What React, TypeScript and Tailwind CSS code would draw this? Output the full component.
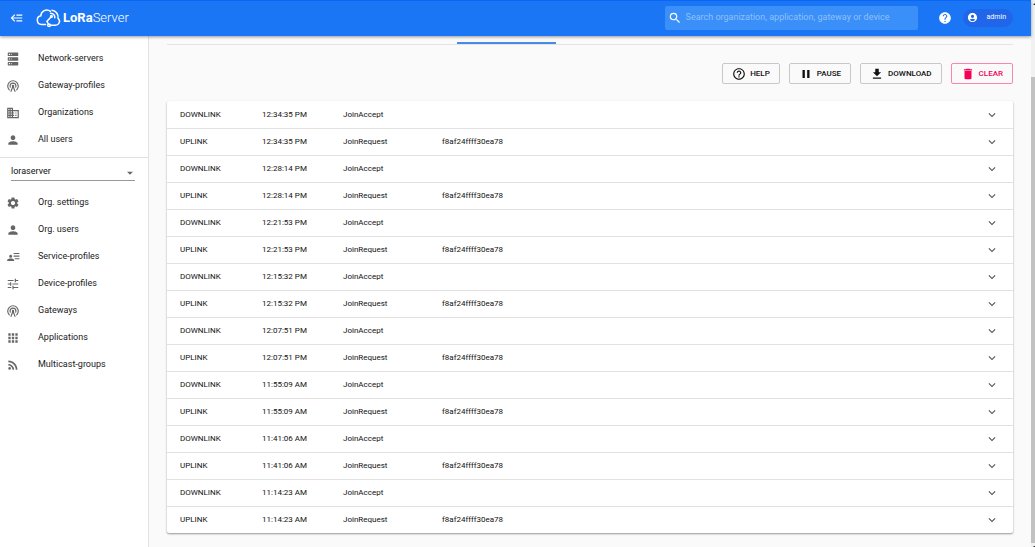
import type { ReactNode } from "react";
import {
  MdApps,
  MdAccountCircle,
  MdDelete,
  MdDomain,
  MdExpandMore,
  MdFileDownload,
  MdHelp,
  MdHelpOutline,
  MdPause,
  MdPerson,
  MdRssFeed,
  MdSearch,
  MdSettings,
  MdTune,
  MdArrowDropDown,
} from "react-icons/md";

function Glyph({ d }: { d: string }) {
  return (
    <svg viewBox="0 0 24 24" fill="currentColor" className="size-full" aria-hidden="true">
      <path d={d} />
    </svg>
  );
}

const BACKBURGER =
  "M5,13L9,17L7.6,18.42L1.18,12L7.6,5.58L9,7L5,11H21V13H5M21,6V8H11V6H21M21,16V18H11V16H21Z";
const SERVER =
  "M4,1H20A1,1 0 0,1 21,2V6A1,1 0 0,1 20,7H4A1,1 0 0,1 3,6V2A1,1 0 0,1 4,1M4,9H20A1,1 0 0,1 21,10V14A1,1 0 0,1 20,15H4A1,1 0 0,1 3,14V10A1,1 0 0,1 4,9M4,17H20A1,1 0 0,1 21,18V22A1,1 0 0,1 20,23H4A1,1 0 0,1 3,22V18A1,1 0 0,1 4,17M9,5H10V3H9V5M9,13H10V11H9V13M9,21H10V19H9V21M5,3V5H7V3H5M5,11V13H7V11H5M5,19V21H7V19H5Z";
const RADIO_TOWER =
  "M12,10A2,2 0 0,1 14,12C14,12.5 13.82,12.94 13.53,13.29L16.7,22H14.57L12,14.93L9.43,22H7.3L10.47,13.29C10.18,12.94 10,12.5 10,12A2,2 0 0,1 12,10M12,8A4,4 0 0,0 8,12C8,12.5 8.1,13 8.28,13.46L7.4,15.86C6.53,14.81 6,13.47 6,12A6,6 0 0,1 12,6A6,6 0 0,1 18,12C18,13.47 17.47,14.81 16.6,15.86L15.72,13.46C15.9,13 16,12.5 16,12A4,4 0 0,0 12,8M12,4A8,8 0 0,0 4,12C4,14.36 5,16.5 6.64,17.94L5.92,19.94C3.54,18.11 2,15.23 2,12A10,10 0 0,1 12,2A10,10 0 0,1 22,12C22,15.23 20.46,18.11 18.08,19.94L17.36,17.94C19,16.5 20,14.36 20,12A8,8 0 0,0 12,4Z";
const ACCOUNT_DETAILS =
  "M8,8A2.6,2.6 0 1,1 8,13.2A2.6,2.6 0 1,1 8,8ZM8,14.5C11,14.5 14,15.5 14,17.2V19H2V17.2C2,15.5 5,14.5 8,14.5ZM13,5H23V7H13ZM13,9.5H23V11.5H13ZM15,14H23V16H15Z";

type NavEntry = { label: string; icon: ReactNode };

const globalNav: NavEntry[] = [
  { label: "Network-servers", icon: <Glyph d={SERVER} /> },
  { label: "Gateway-profiles", icon: <Glyph d={RADIO_TOWER} /> },
  { label: "Organizations", icon: <MdDomain className="size-full" /> },
  { label: "All users", icon: <MdPerson className="size-full" /> },
];

const orgNav: NavEntry[] = [
  { label: "Org. settings", icon: <MdSettings className="size-full" /> },
  { label: "Org. users", icon: <MdPerson className="size-full" /> },
  { label: "Service-profiles", icon: <Glyph d={ACCOUNT_DETAILS} /> },
  { label: "Device-profiles", icon: <MdTune className="size-full" /> },
  { label: "Gateways", icon: <Glyph d={RADIO_TOWER} /> },
  { label: "Applications", icon: <MdApps className="size-full" /> },
  { label: "Multicast-groups", icon: <MdRssFeed className="size-full" /> },
];

const joinTimes = [
  "12:34:35 PM",
  "12:28:14 PM",
  "12:21:53 PM",
  "12:15:32 PM",
  "12:07:51 PM",
  "11:55:09 AM",
  "11:41:06 AM",
  "11:14:23 AM",
];

const frames = joinTimes.flatMap((time) => [
  { direction: "DOWNLINK", time, type: "JoinAccept", devEui: "" },
  { direction: "UPLINK", time, type: "JoinRequest", devEui: "f8af24ffff30ea78" },
]);

function Logo() {
  return (
    <a href="#" className="flex items-center text-white" aria-label="LoRaServer">
      <svg viewBox="0 0 26 20" className="h-5 w-[26px]" fill="none" stroke="currentColor" strokeWidth="1.5" strokeLinecap="round" aria-hidden="true">
        <path d="M9.5 16.5H5.5A4.4 4.4 0 0 1 4.8 7.8A6 6 0 0 1 14.5 3.4" />
        <path d="M14.5 17.3H19.5A4 4 0 0 0 22.6 10.8" />
        <circle cx="13" cy="17.3" r="1.3" />
        <path d="M15.4 8.6L10.9 13.4L12.4 16" />
        <circle cx="15.4" cy="8.4" r="0.8" fill="currentColor" />
        <path d="M14.6 5.2A4.2 4.2 0 0 1 18.8 9.8" />
        <path d="M16 2.2A7 7 0 0 1 22 10.4" />
      </svg>
      <span className="ml-px text-[13px] leading-4">
        <span className="font-bold">LoRa</span>
        <span className="font-light">Server</span>
      </span>
    </a>
  );
}

function Header() {
  return (
    <header className="relative z-10 flex h-9 shrink-0 items-center border-t border-[#0a66f5] bg-[#1b76f5] pr-[18px] pb-0.5 pl-[10px] text-white shadow-[0_1px_3px_rgba(0,0,0,0.4)]">
      <button type="button" aria-label="Collapse menu" className="size-[14px]">
        <Glyph d={BACKBURGER} />
      </button>
      <div className="ml-3">
        <Logo />
      </div>
      <label className="ml-auto flex h-6 w-[253px] items-center rounded-xs bg-[#3b8ff8] pl-[3px]">
        <MdSearch className="size-[14px] shrink-0" aria-hidden="true" />
        <input
          type="search"
          aria-label="Search"
          placeholder="Search organization, application, gateway or device"
          className="ml-1 min-w-0 flex-1 bg-transparent text-[9px] outline-none placeholder:text-[#8fc0fb]"
        />
      </label>
      <button type="button" aria-label="Help" className="ml-5 size-[14px]">
        <MdHelp className="size-full" />
      </button>
      <button type="button" className="ml-[11px] flex h-[18px] items-center rounded-full bg-[#2166e8] pr-[7px] pl-1 text-[7px]">
        <MdAccountCircle className="size-[11px]" />
        <span className="ml-[9px]">admin</span>
      </button>
    </header>
  );
}

function NavList({ items }: { items: NavEntry[] }) {
  return (
    <ul>
      {items.map((item) => (
        <li key={item.label}>
          <a href="#" className="flex h-[27px] items-center pl-[6px] text-[9px] text-[#212121]">
            <span className="size-[14px] text-[#666]">{item.icon}</span>
            <span className="ml-[18px]">{item.label}</span>
          </a>
        </li>
      ))}
    </ul>
  );
}

function Sidebar() {
  return (
    <nav className="w-[149px] shrink-0 border-r border-[#e2e2e2] bg-white pt-[9px]">
      <NavList items={globalNav} />
      <div className="mt-1 border-t border-[#e2e2e2] pt-[6px] pr-[13px] pb-2 pl-[11px]">
        <div className="relative border-b border-[#999]">
          <select aria-label="Organization" className="block h-4 w-full appearance-none bg-transparent text-[9px] text-[#111] outline-none">
            <option>loraserver</option>
          </select>
          <MdArrowDropDown className="pointer-events-none absolute top-[2px] -right-[2px] size-[14px] text-[#666]" aria-hidden="true" />
        </div>
      </div>
      <NavList items={orgNav} />
    </nav>
  );
}

function ActionButton({ icon, children, danger = false }: { icon: ReactNode; children: string; danger?: boolean }) {
  return (
    <button
      type="button"
      className={`flex h-[21px] items-center gap-1 rounded-xs border px-[9px] text-[8px] font-medium ${
        danger ? "border-[#fa86ad] text-[#f50057]" : "border-[#c8c8c8] text-[#111]"
      }`}
    >
      <span className="size-[14px]">{icon}</span>
      <span>{children}</span>
    </button>
  );
}

function FrameRow({ frame }: { frame: (typeof frames)[number] }) {
  return (
    <li className="flex h-[27px] items-center border-t border-[#e2e2e2] pr-[14px] pl-[13px] first:border-transparent">
      <span className="w-[82px]">{frame.direction}</span>
      <span className="w-[81px]">{frame.time}</span>
      <span className="w-[99px]">{frame.type}</span>
      <span>{frame.devEui}</span>
      <button type="button" aria-label="Expand frame" className="ml-auto size-[14px] text-[#555]">
        <MdExpandMore className="size-full" />
      </button>
    </li>
  );
}

export default function App() {
  return (
    <div className="flex min-h-screen bg-[#fafafa] font-[Roboto,sans-serif] text-[#111]">
      <div className="flex min-w-0 flex-1 flex-col">
        <Header />
        <div className="flex flex-1">
          <Sidebar />
          <main className="min-w-0 flex-1 px-[18px] pb-3">
            <div className="flex h-[9px] items-end border-b border-[#e4e4e4]">
              <div className="ml-[290px] h-[2px] w-[99px] bg-[#468be6]" />
            </div>
            <div className="mt-[18px] flex justify-end gap-[9px]">
              <ActionButton icon={<MdHelpOutline className="size-full" />}>HELP</ActionButton>
              <ActionButton icon={<MdPause className="size-full" />}>PAUSE</ActionButton>
              <ActionButton icon={<MdFileDownload className="size-full" />}>DOWNLOAD</ActionButton>
              <ActionButton danger icon={<MdDelete className="size-full" />}>
                CLEAR
              </ActionButton>
            </div>
            <ul className="mt-[17px] rounded-xs bg-white text-[8px] shadow-[0_1px_2px_rgba(0,0,0,0.4)]">
              {frames.map((frame, index) => (
                <FrameRow key={index} frame={frame} />
              ))}
            </ul>
          </main>
        </div>
      </div>
      <div className="flex w-1 shrink-0 flex-col bg-[#f1f1f1] pt-[3px]" aria-hidden="true">
        <svg viewBox="0 0 4 2" className="h-0.5 w-1 fill-[#333]">
          <path d="M4 0V2H2Z" />
        </svg>
        <div className="mt-[72px] mb-[3px] flex-1 bg-[#c1c1c1]" />
        <svg viewBox="0 0 4 1" className="h-px w-1 fill-[#333]">
          <path d="M2 0H4V1H3Z" />
        </svg>
      </div>
    </div>
  );
}
